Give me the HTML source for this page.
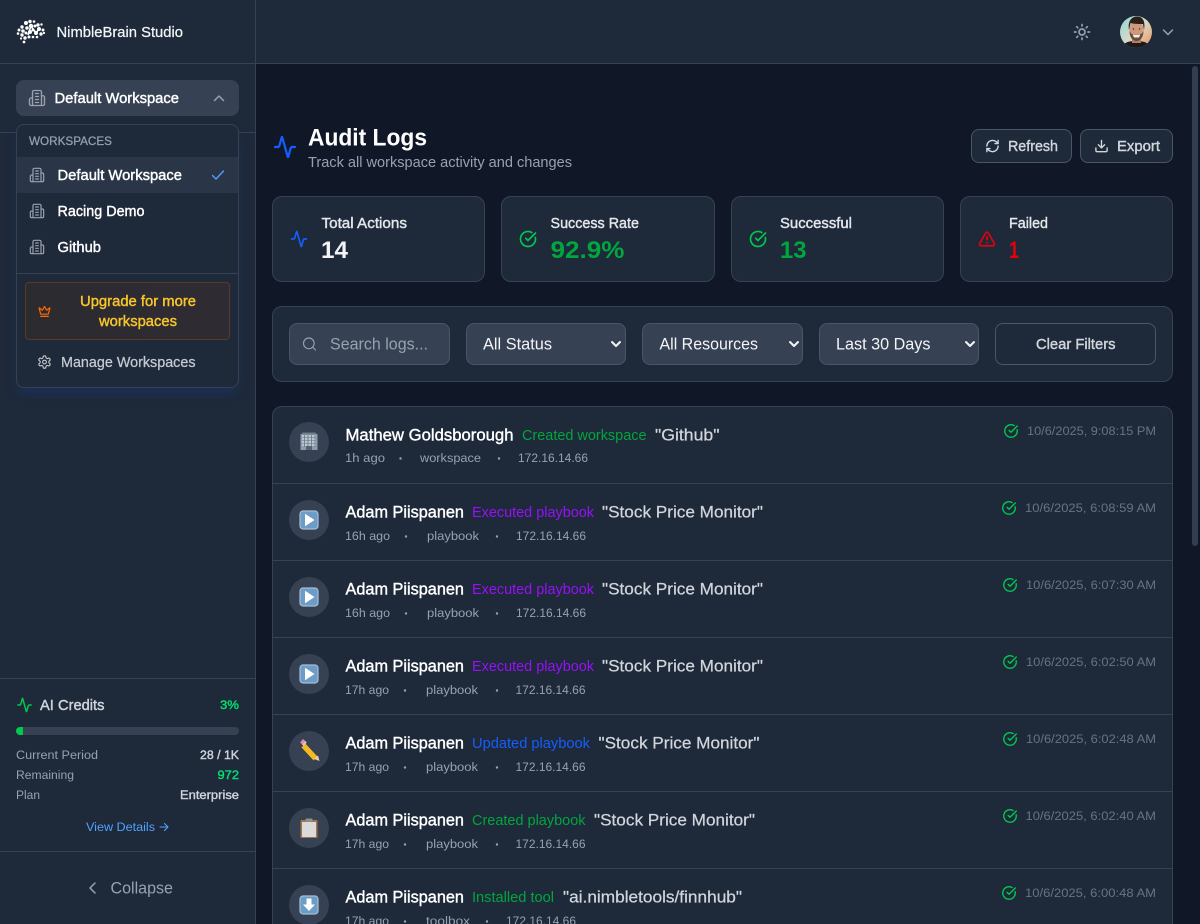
<!DOCTYPE html>
<html lang="en"><head><meta charset="utf-8"><title>Audit Logs - NimbleBrain Studio</title>
<style>
html,body{margin:0;padding:0;width:1200px;height:924px;overflow:hidden;background:#101828;font-family:"Liberation Sans",sans-serif}
#app{position:relative;width:1200px;height:924px;overflow:hidden;background:#101828}
.b{position:absolute;box-sizing:border-box}
svg.o{position:absolute;left:0;top:0;width:1200px;height:924px}
text{fill:currentColor;font-family:"Liberation Sans",sans-serif;white-space:pre}
.m{stroke:currentColor;stroke-width:.25px}
.s{stroke:currentColor;stroke-width:.4px}
.f{font-size:14.5px}.g{font-size:16.5px}.h{font-size:12.4px}
.i{fill:none;stroke:currentColor;stroke-width:2.2;stroke-linecap:round;stroke-linejoin:round}
</style></head><body><div id="app">
<div class="b" style="left:0;top:0;width:256px;height:924px;background:#1e2939;border-right:1px solid #364153"></div>
<div class="b" style="left:256px;top:0;width:944px;height:64px;background:#1e2939"></div>
<div class="b" style="left:0;top:63px;width:1200px;height:1px;background:#364153"></div>
<div class="b" style="left:0;top:132px;width:255px;height:1px;background:#364153"></div>
<div class="b" style="left:16px;top:80px;width:223px;height:36px;border-radius:8px;background:#364153"></div>
<div class="b" style="left:16px;top:124px;width:223px;height:264px;border-radius:8px;background:#1e2939;border:1px solid #364153;box-shadow:0 8px 12px -2px rgba(25,55,130,.4)"></div>
<div class="b" style="left:17px;top:157px;width:221px;height:36px;background:#2a3648"></div>
<div class="b" style="left:17px;top:273px;width:221px;height:1px;background:#364153"></div>
<div class="b" style="left:25px;top:282px;width:205px;height:58px;border-radius:4px;background:linear-gradient(90deg,#2b2b30,#2f2b33);border:1px solid #5a3a27"></div>
<div class="b" style="left:0;top:678px;width:255px;height:1px;background:#364153"></div>
<div class="b" style="left:16px;top:727px;width:223px;height:8px;border-radius:4px;background:#364153;overflow:hidden"><div style="width:7px;height:8px;background:#00c950"></div></div>
<div class="b" style="left:0;top:851px;width:255px;height:1px;background:#364153"></div>
<div class="b" style="left:1192px;top:66px;width:6px;height:480px;border-radius:3px;background:#323e50"></div>
<div class="b" style="left:971px;top:129px;width:101px;height:34px;border-radius:8px;background:#1e2939;border:1px solid #4a5565"></div>
<div class="b" style="left:1080px;top:129px;width:93px;height:34px;border-radius:8px;background:#1e2939;border:1px solid #4a5565"></div>
<div class="b" style="left:272px;top:196px;width:213px;height:86px;border-radius:10px;background:#1e2939;border:1px solid #364153"></div>
<div class="b" style="left:501px;top:196px;width:214px;height:86px;border-radius:10px;background:#1e2939;border:1px solid #364153"></div>
<div class="b" style="left:731px;top:196px;width:213px;height:86px;border-radius:10px;background:#1e2939;border:1px solid #364153"></div>
<div class="b" style="left:960px;top:196px;width:213px;height:86px;border-radius:10px;background:#1e2939;border:1px solid #364153"></div>
<div class="b" style="left:272px;top:306px;width:901px;height:76px;border-radius:10px;background:#1e2939;border:1px solid #364153"></div>
<div class="b" style="left:289px;top:323px;width:161px;height:42px;border-radius:8px;background:#364153;border:1px solid #4a5565"></div>
<div class="b" style="left:466px;top:323px;width:160px;height:42px;border-radius:8px;background:#364153;border:1px solid #4a5565"></div>
<div class="b" style="left:642px;top:323px;width:161px;height:42px;border-radius:8px;background:#364153;border:1px solid #4a5565"></div>
<div class="b" style="left:819px;top:323px;width:160px;height:42px;border-radius:8px;background:#364153;border:1px solid #4a5565"></div>
<div class="b" style="left:995px;top:323px;width:161px;height:42px;border-radius:8px;background:#1e2939;border:1px solid #4a5565"></div>
<div class="b" style="left:272px;top:406px;width:901px;height:540px;border-radius:10px;background:#1e2939;border:1px solid #364153"></div>
<div class="b" style="left:273px;top:483px;width:899px;height:1px;background:#364153"></div>
<div class="b" style="left:273px;top:560px;width:899px;height:1px;background:#364153"></div>
<div class="b" style="left:273px;top:637px;width:899px;height:1px;background:#364153"></div>
<div class="b" style="left:273px;top:714px;width:899px;height:1px;background:#364153"></div>
<div class="b" style="left:273px;top:791px;width:899px;height:1px;background:#364153"></div>
<div class="b" style="left:273px;top:868px;width:899px;height:1px;background:#364153"></div>

<svg class="o" viewBox="0 0 1200 924" xmlns="http://www.w3.org/2000/svg">
<defs>
<symbol id="bld" viewBox="0 0 24 24"><g class="i" style="stroke-width:1.8"><path d="M6 22V4a2 2 0 0 1 2-2h8a2 2 0 0 1 2 2v18Z"/><path d="M6 12H4a2 2 0 0 0-2 2v6a2 2 0 0 0 2 2h2"/><path d="M18 9h2a2 2 0 0 1 2 2v9a2 2 0 0 1-2 2h-2"/><path d="M10 6h4M10 10h4M10 14h4M10 18h4"/></g></symbol>
<symbol id="pulse" viewBox="0 0 24 24"><path class="i" d="M22 12h-2.48a2 2 0 0 0-1.93 1.46l-2.35 8.36a.25.25 0 0 1-.48 0L9.24 2.18a.25.25 0 0 0-.48 0l-2.35 8.36A2 2 0 0 1 4.49 12H2"/></symbol>
<symbol id="chk" viewBox="0 0 24 24"><g class="i"><path d="M21.801 10A10 10 0 1 1 17 3.335"/><path d="m9 11 3 3L22 4"/></g></symbol>
<symbol id="pl" viewBox="0 0 20 20"><rect x="1" y="1" width="18" height="18" rx="3" fill="#6d9cc6" stroke="#a3bfd8" stroke-width="1.2"/><path d="M6 3.8 15.500 10 6 16.200z" fill="#fff"/></symbol>
<clipPath id="av"><circle cx="1136" cy="32" r="16"/></clipPath>
<linearGradient id="avg" x1="0" y1="0" x2="1" y2="1"><stop offset="0" stop-color="#8fd8d6"/><stop offset=".5" stop-color="#d8d8c8"/><stop offset="1" stop-color="#ee955a"/></linearGradient>
</defs>

<!-- logo -->
<g fill="#fff">
<circle cx="22" cy="27" r="1.7"/><circle cx="26" cy="23" r="2"/><circle cx="30" cy="21.500" r="1.700"/><circle cx="34" cy="21.500" r="1.300"/><circle cx="38" cy="25" r="1.700"/><circle cx="41.500" cy="24.500" r="1.200"/>
<circle cx="19" cy="30" r="1.500"/><circle cx="23" cy="31" r="1.800"/><circle cx="27" cy="28" r="1.800"/><circle cx="31" cy="26" r="2.200"/><circle cx="35" cy="26" r="1.500"/><circle cx="39" cy="29" r="2"/><circle cx="43" cy="30" r="1.500"/>
<circle cx="18" cy="33.500" r="1.300"/><circle cx="22" cy="35" r="1.700"/><circle cx="26" cy="33" r="1.500"/><circle cx="30" cy="32" r="2"/><circle cx="33" cy="30" r="1.500"/><circle cx="36" cy="33" r="2"/><circle cx="41" cy="34" r="1.700"/><circle cx="44" cy="33" r="1.100"/>
<circle cx="25" cy="38" r="1.700"/><circle cx="29" cy="37" r="1.500"/><circle cx="33" cy="37" r="1.300"/><circle cx="37" cy="37" r="1.300"/><circle cx="24" cy="42" r="1.400"/><circle cx="21" cy="38.500" r="1.100"/>
</g>
<g fill="none" stroke="#fff" stroke-width="1.600"><path d="M28 35 31 26 36 33 39 29"/></g>
<text x="56.5" y="37" textLength="126.500" lengthAdjust="spacingAndGlyphs" class="f m" style="color:#f3f4f6">NimbleBrain Studio</text>

<!-- top right -->
<g color="#99a1af" transform="translate(1073,23)"><svg width="18" height="18" viewBox="0 0 24 24"><g class="i"><circle cx="12" cy="12" r="4"/><path d="M12 2v2M12 20v2M4.930 4.930l1.410 1.410M17.660 17.660l1.410 1.410M2 12h2M20 12h2M6.340 17.660l-1.410 1.410M19.070 4.930l-1.410 1.410"/></g></svg></g>
<g clip-path="url(#av)">
<rect x="1120" y="16" width="32" height="32" fill="url(#avg)"/>
<path d="M1122 48c1-6 8-7 14-7s13 1 14 7z" fill="#1b1a1c"/>
<rect x="1132" y="36" width="9" height="7" fill="#b47e5f"/>
<ellipse cx="1136.500" cy="30" rx="7" ry="9.500" fill="#cf9a7b"/>
<path d="M1129.500 31c0 6 3 10 7 10s7-4 7-10c-1 2-2 3-3 3h-8c-1 0-2-1-3-3z" fill="#6b4a39"/>
<path d="M1132.500 34.500h8l-1.500 3h-5z" fill="#f6ece4"/>
<path d="M1129 30c-1.500-8 2-13.500 8-13.500s8.500 5 7 13.500l-1-6c-3 0-9 0-12.500-1z" fill="#2a1f1b"/>
<circle cx="1133.500" cy="29" r=".7" fill="#3a2a22"/><circle cx="1139.500" cy="29" r=".7" fill="#3a2a22"/>
</g>
<path class="i" color="#99a1af" style="stroke-width:1.500" d="M1163.500 30l4.500 4.500 4.500-4.500"/>

<!-- workspace selector -->
<use href="#bld" x="28" y="89" width="18" height="18" color="#99a1af"/>
<text x="54.500" y="103" textLength="124.500" lengthAdjust="spacingAndGlyphs" class="f s" style="color:#fff">Default Workspace</text>
<path class="i" color="#99a1af" style="stroke-width:1.500" d="M214.500 100.500l4.500-4.500 4.500 4.500"/>
<text x="29" y="145" textLength="83" lengthAdjust="spacingAndGlyphs" class="h m" style="color:#99a1af">WORKSPACES</text>
<use href="#bld" x="29" y="167" width="16" height="16" color="#99a1af"/>
<text x="57.500" y="180" textLength="124.500" lengthAdjust="spacingAndGlyphs" class="f s" style="color:#fff">Default Workspace</text>
<path class="i" color="#51a2ff" style="stroke-width:1.300" d="M212.500 175.500l3.500 3.500 7.500-8"/>
<use href="#bld" x="29" y="203" width="16" height="16" color="#99a1af"/>
<text x="57.500" y="216" textLength="87" lengthAdjust="spacingAndGlyphs" class="f s" style="color:#fff">Racing Demo</text>
<use href="#bld" x="29" y="239" width="16" height="16" color="#99a1af"/>
<text x="57.500" y="252" textLength="43.500" lengthAdjust="spacingAndGlyphs" class="f s" style="color:#fff">Github</text>
<text x="80" y="306" textLength="116" lengthAdjust="spacingAndGlyphs" class="f s" style="color:#f8c62b">Upgrade for more</text>
<text x="99" y="326" textLength="78" lengthAdjust="spacingAndGlyphs" class="f s" style="color:#f8c62b">workspaces</text>
<g color="#ff6900" transform="translate(38,305)"><svg width="13" height="13" viewBox="0 0 24 24"><g class="i"><path d="M11.562 3.266a.5.5 0 0 1 .876 0L15.390 8.870a1 1 0 0 0 1.516.294L21.183 5.500a.5.5 0 0 1 .798.519l-2.834 10.246a1 1 0 0 1-.956.734H5.810a1 1 0 0 1-.957-.734L2.020 6.020a.5.5 0 0 1 .798-.519l4.276 3.664a1 1 0 0 0 1.516-.294z"/><path d="M5 21h14"/></g></svg></g>
<g color="#c5cad3" transform="translate(37,354.500)"><svg width="15" height="15" viewBox="0 0 24 24"><g class="i" style="stroke-width:1.800"><path d="M12.220 2h-.44a2 2 0 0 0-2 2v.18a2 2 0 0 1-1 1.730l-.43.25a2 2 0 0 1-2 0l-.15-.08a2 2 0 0 0-2.730.73l-.22.38a2 2 0 0 0 .73 2.730l.15.1a2 2 0 0 1 1 1.720v.51a2 2 0 0 1-1 1.740l-.15.09a2 2 0 0 0-.73 2.730l.22.38a2 2 0 0 0 2.730.73l.15-.08a2 2 0 0 1 2 0l.43.25a2 2 0 0 1 1 1.730V20a2 2 0 0 0 2 2h.44a2 2 0 0 0 2-2v-.18a2 2 0 0 1 1-1.730l.43-.25a2 2 0 0 1 2 0l.15.08a2 2 0 0 0 2.730-.73l.22-.39a2 2 0 0 0-.73-2.730l-.15-.08a2 2 0 0 1-1-1.740v-.5a2 2 0 0 1 1-1.740l.15-.09a2 2 0 0 0 .73-2.730l-.22-.38a2 2 0 0 0-2.730-.73l-.15.08a2 2 0 0 1-2 0l-.43-.25a2 2 0 0 1-1-1.730V4a2 2 0 0 0-2-2z"/><circle cx="12" cy="12" r="3"/></g></svg></g>
<text x="61" y="367" textLength="134.500" lengthAdjust="spacingAndGlyphs" class="f m" style="color:#c5cad3">Manage Workspaces</text>

<!-- credits -->
<use href="#pulse" x="16.500" y="697" width="16" height="16" color="#00c950"/>
<text x="40" y="710" textLength="64.500" lengthAdjust="spacingAndGlyphs" class="f s" style="color:#d1d5dc">AI Credits</text>
<text x="220" y="709" textLength="19" lengthAdjust="spacingAndGlyphs" class="h s" style="color:#05df72">3%</text>
<text x="16" y="759" textLength="82" lengthAdjust="spacingAndGlyphs" class="h" style="color:#99a1af">Current Period</text>
<text x="200" y="759" textLength="39" lengthAdjust="spacingAndGlyphs" class="h s" style="color:#d1d5dc">28 / 1K</text>
<text x="16" y="779" textLength="58" lengthAdjust="spacingAndGlyphs" class="h" style="color:#99a1af">Remaining</text>
<text x="217.500" y="779" textLength="21.500" lengthAdjust="spacingAndGlyphs" class="h s" style="color:#05df72">972</text>
<text x="16" y="799" textLength="24" lengthAdjust="spacingAndGlyphs" class="h" style="color:#99a1af">Plan</text>
<text x="180" y="799" textLength="59" lengthAdjust="spacingAndGlyphs" class="h s" style="color:#d1d5dc">Enterprise</text>
<text x="86" y="831" textLength="69" lengthAdjust="spacingAndGlyphs" class="h" style="color:#51a2ff">View Details</text>
<path class="i" color="#51a2ff" style="stroke-width:1.100" d="M160 827h8M164.500 823.500l3.500 3.500-3.500 3.500"/>
<path class="i" color="#99a1af" style="stroke-width:1.500" d="M95 883l-5 5 5 5"/>
<text x="110.500" y="893.500" textLength="62.500" lengthAdjust="spacingAndGlyphs" class="g" style="color:#99a1af">Collapse</text>

<!-- header -->
<use href="#pulse" x="273" y="135" width="24" height="24" color="#155dfc"/>
<text x="308" y="145.500" textLength="119" lengthAdjust="spacingAndGlyphs" font-size="24.500" font-weight="700" style="color:#fff">Audit Logs</text>
<text x="308" y="167" textLength="264" lengthAdjust="spacingAndGlyphs" class="f" style="color:#99a1af">Track all workspace activity and changes</text>
<g color="#d1d5dc" transform="translate(985,138.500)"><svg width="15" height="15" viewBox="0 0 24 24"><g class="i"><path d="M3 12a9 9 0 0 1 9-9 9.750 9.750 0 0 1 6.740 2.740L21 8"/><path d="M21 3v5h-5"/><path d="M21 12a9 9 0 0 1-9 9 9.750 9.750 0 0 1-6.740-2.740L3 16"/><path d="M8 16H3v5"/></g></svg></g>
<text x="1008" y="151" textLength="50" lengthAdjust="spacingAndGlyphs" class="f s" style="color:#d1d5dc">Refresh</text>
<g color="#d1d5dc" transform="translate(1094,138.500)"><svg width="15" height="15" viewBox="0 0 24 24"><g class="i"><path d="M12 15V3"/><path d="M21 15v4a2 2 0 0 1-2 2H5a2 2 0 0 1-2-2v-4"/><path d="m7 10 5 5 5-5"/></g></svg></g>
<text x="1117" y="151" textLength="43" lengthAdjust="spacingAndGlyphs" class="f s" style="color:#d1d5dc">Export</text>

<!-- stats -->
<use href="#pulse" x="290" y="230" width="18" height="18" color="#155dfc"/>
<text x="321.500" y="228" textLength="85.500" lengthAdjust="spacingAndGlyphs" class="f s" style="color:#e5e7eb">Total Actions</text>
<text x="321" y="258" textLength="27" lengthAdjust="spacingAndGlyphs" font-size="24.500" font-weight="700" style="color:#f3f4f6">14</text>
<use href="#chk" x="519" y="230" width="18" height="18" color="#00c950"/>
<text x="550.500" y="228" textLength="88.500" lengthAdjust="spacingAndGlyphs" class="f s" style="color:#e5e7eb">Success Rate</text>
<text x="550.500" y="258" textLength="74" lengthAdjust="spacingAndGlyphs" font-size="24.500" font-weight="700" style="color:#00a63e">92.9%</text>
<use href="#chk" x="749" y="230" width="18" height="18" color="#00c950"/>
<text x="780" y="228" textLength="72" lengthAdjust="spacingAndGlyphs" class="f s" style="color:#e5e7eb">Successful</text>
<text x="780" y="258" textLength="26.500" lengthAdjust="spacingAndGlyphs" font-size="24.500" font-weight="700" style="color:#00a63e">13</text>
<g color="#e7000b" transform="translate(978,230)"><svg width="18" height="18" viewBox="0 0 24 24"><g class="i"><path d="m21.730 18-8-14a2 2 0 0 0-3.480 0l-8 14A2 2 0 0 0 4 21h16a2 2 0 0 0 1.730-3"/><path d="M12 9v4"/><path d="M12 17h.01"/></g></svg></g>
<text x="1009" y="228" textLength="39" lengthAdjust="spacingAndGlyphs" class="f s" style="color:#e5e7eb">Failed</text>
<text x="1009" y="258" textLength="10" lengthAdjust="spacingAndGlyphs" font-size="24.500" font-weight="700" style="color:#e7000b">1</text>

<!-- filters -->
<g color="#99a1af" transform="translate(301.500,336)"><svg width="16" height="16" viewBox="0 0 24 24"><g class="i" style="stroke-width:1.700"><path d="m21 21-4.340-4.340"/><circle cx="11" cy="11" r="8"/></g></svg></g>
<text x="330" y="349.500" textLength="98" lengthAdjust="spacingAndGlyphs" class="g" style="color:#99a1af">Search logs...</text>
<text x="483" y="349.500" textLength="69" lengthAdjust="spacingAndGlyphs" class="g" style="color:#f3f4f6">All Status</text>
<text x="659.500" y="349.500" textLength="98.500" lengthAdjust="spacingAndGlyphs" class="g" style="color:#f3f4f6">All Resources</text>
<text x="836" y="349.500" textLength="94.500" lengthAdjust="spacingAndGlyphs" class="g" style="color:#f3f4f6">Last 30 Days</text>
<g fill="none" stroke="#f3f4f6" stroke-width="2" stroke-linecap="round" stroke-linejoin="round"><path d="M612 342l4 4 4-4"/><path d="M790 342l4 4 4-4"/><path d="M966 342l4 4 4-4"/></g>
<text x="1036" y="349" textLength="79.500" lengthAdjust="spacingAndGlyphs" class="f s" style="color:#d1d5dc">Clear Filters</text>

<!-- rows -->
<g>
<circle cx="309" cy="442" r="20" fill="#364153"/>
<rect x="300.500" y="434" width="17" height="16" fill="#8f9cab"/><rect x="302" y="432.500" width="14" height="2" fill="#6f7b88"/>
<path d="M302 436h14M302 439h14M302 442h14M302 445h14" stroke="#c3d3e0" stroke-width="1.500"/><path d="M304.500 435v12M308 435v12M311.500 435v12M315 435v12" stroke="#5f6b78" stroke-width=".7"/><rect x="306" y="446" width="6" height="4" fill="#59626d"/>
<text x="345.500" y="440.500" textLength="168" lengthAdjust="spacingAndGlyphs" class="g s" style="color:#fff">Mathew Goldsborough</text>
<text x="522" y="440" textLength="124.500" lengthAdjust="spacingAndGlyphs" class="f" style="color:#00a63e">Created workspace</text>
<text x="655" y="440.500" textLength="64.500" lengthAdjust="spacingAndGlyphs" class="g m" style="color:#d1d5dc">"Github"</text>
<text x="345" y="462" textLength="40" lengthAdjust="spacingAndGlyphs" class="h" style="color:#99a1af">1h ago</text><circle cx="400.500" cy="458.500" r="1.200" fill="#99a1af"/>
<text x="420" y="462" textLength="61" lengthAdjust="spacingAndGlyphs" class="h" style="color:#99a1af">workspace</text><circle cx="499" cy="458.500" r="1.200" fill="#99a1af"/>
<text x="518" y="462" textLength="70" lengthAdjust="spacingAndGlyphs" class="h" style="color:#99a1af">172.16.14.66</text>
<use href="#chk" x="1003.500" y="423.500" width="15" height="15" color="#00c950"/>
<text x="1027" y="435" textLength="129" lengthAdjust="spacingAndGlyphs" class="h" style="color:#6a7282">10/6/2025, 9:08:15 PM</text>
</g>
<g transform="translate(0,77)">
<circle cx="309" cy="443" r="20" fill="#364153"/><use href="#pl" x="299" y="433" width="20" height="20"/>
<text x="345.500" y="440.500" textLength="118.500" lengthAdjust="spacingAndGlyphs" class="g s" style="color:#fff">Adam Piispanen</text>
<text x="472" y="440" textLength="122" lengthAdjust="spacingAndGlyphs" class="f" style="color:#9810fa">Executed playbook</text>
<text x="602" y="440.500" textLength="161" lengthAdjust="spacingAndGlyphs" class="g m" style="color:#d1d5dc">"Stock Price Monitor"</text>
<text x="345" y="463" textLength="45" lengthAdjust="spacingAndGlyphs" class="h" style="color:#99a1af">16h ago</text><circle cx="406" cy="459.500" r="1.200" fill="#99a1af"/>
<text x="427" y="463" textLength="52" lengthAdjust="spacingAndGlyphs" class="h" style="color:#99a1af">playbook</text><circle cx="497" cy="459.500" r="1.200" fill="#99a1af"/>
<text x="516" y="463" textLength="70" lengthAdjust="spacingAndGlyphs" class="h" style="color:#99a1af">172.16.14.66</text>
<use href="#chk" x="1001.500" y="423.500" width="15" height="15" color="#00c950"/>
<text x="1025" y="435" textLength="131" lengthAdjust="spacingAndGlyphs" class="h" style="color:#6a7282">10/6/2025, 6:08:59 AM</text>
</g>
<g transform="translate(0,154)">
<circle cx="309" cy="443" r="20" fill="#364153"/><use href="#pl" x="299" y="433" width="20" height="20"/>
<text x="345.500" y="440.500" textLength="118.500" lengthAdjust="spacingAndGlyphs" class="g s" style="color:#fff">Adam Piispanen</text>
<text x="472" y="440" textLength="122" lengthAdjust="spacingAndGlyphs" class="f" style="color:#9810fa">Executed playbook</text>
<text x="602" y="440.500" textLength="161" lengthAdjust="spacingAndGlyphs" class="g m" style="color:#d1d5dc">"Stock Price Monitor"</text>
<text x="345" y="463" textLength="45" lengthAdjust="spacingAndGlyphs" class="h" style="color:#99a1af">16h ago</text><circle cx="406" cy="459.500" r="1.200" fill="#99a1af"/>
<text x="427" y="463" textLength="52" lengthAdjust="spacingAndGlyphs" class="h" style="color:#99a1af">playbook</text><circle cx="497" cy="459.500" r="1.200" fill="#99a1af"/>
<text x="516" y="463" textLength="70" lengthAdjust="spacingAndGlyphs" class="h" style="color:#99a1af">172.16.14.66</text>
<use href="#chk" x="1002.500" y="423.500" width="15" height="15" color="#00c950"/>
<text x="1026" y="435" textLength="130" lengthAdjust="spacingAndGlyphs" class="h" style="color:#6a7282">10/6/2025, 6:07:30 AM</text>
</g>
<g transform="translate(0,231)">
<circle cx="309" cy="443" r="20" fill="#364153"/><use href="#pl" x="299" y="433" width="20" height="20"/>
<text x="345.500" y="440.500" textLength="118.500" lengthAdjust="spacingAndGlyphs" class="g s" style="color:#fff">Adam Piispanen</text>
<text x="472" y="440" textLength="122" lengthAdjust="spacingAndGlyphs" class="f" style="color:#9810fa">Executed playbook</text>
<text x="602" y="440.500" textLength="161" lengthAdjust="spacingAndGlyphs" class="g m" style="color:#d1d5dc">"Stock Price Monitor"</text>
<text x="345" y="463" textLength="44" lengthAdjust="spacingAndGlyphs" class="h" style="color:#99a1af">17h ago</text><circle cx="405" cy="459.500" r="1.200" fill="#99a1af"/>
<text x="426" y="463" textLength="52" lengthAdjust="spacingAndGlyphs" class="h" style="color:#99a1af">playbook</text><circle cx="497" cy="459.500" r="1.200" fill="#99a1af"/>
<text x="515.500" y="463" textLength="70" lengthAdjust="spacingAndGlyphs" class="h" style="color:#99a1af">172.16.14.66</text>
<use href="#chk" x="1002.500" y="423.500" width="15" height="15" color="#00c950"/>
<text x="1026" y="435" textLength="130" lengthAdjust="spacingAndGlyphs" class="h" style="color:#6a7282">10/6/2025, 6:02:50 AM</text>
</g>
<g transform="translate(0,308)">
<circle cx="309" cy="443" r="20" fill="#364153"/>
<path d="M303.500 437.500l12 13" stroke="#f5b921" stroke-width="5.500"/><path d="M300 434.500l3-3.500 3.500 3-3 3.500z" fill="#e98a9c"/><path d="M302 436.500l3.300-3.200 1.400 1.400-3.300 3.200z" fill="#c9ced6"/><path d="M314 451l4-3.500 1.500 5.500z" fill="#e6cfa5"/>
<text x="345.500" y="440.500" textLength="118.500" lengthAdjust="spacingAndGlyphs" class="g s" style="color:#fff">Adam Piispanen</text>
<text x="472" y="440" textLength="118" lengthAdjust="spacingAndGlyphs" class="f" style="color:#155dfc">Updated playbook</text>
<text x="598.500" y="440.500" textLength="161" lengthAdjust="spacingAndGlyphs" class="g m" style="color:#d1d5dc">"Stock Price Monitor"</text>
<text x="345" y="463" textLength="44" lengthAdjust="spacingAndGlyphs" class="h" style="color:#99a1af">17h ago</text><circle cx="405" cy="459.500" r="1.200" fill="#99a1af"/>
<text x="426" y="463" textLength="52" lengthAdjust="spacingAndGlyphs" class="h" style="color:#99a1af">playbook</text><circle cx="497" cy="459.500" r="1.200" fill="#99a1af"/>
<text x="515.500" y="463" textLength="70" lengthAdjust="spacingAndGlyphs" class="h" style="color:#99a1af">172.16.14.66</text>
<use href="#chk" x="1002.500" y="423.500" width="15" height="15" color="#00c950"/>
<text x="1026" y="435" textLength="130" lengthAdjust="spacingAndGlyphs" class="h" style="color:#6a7282">10/6/2025, 6:02:48 AM</text>
</g>
<g transform="translate(0,385)">
<circle cx="309" cy="443" r="20" fill="#364153"/>
<rect x="300.500" y="435" width="17" height="18" rx="1" fill="#a5754a"/><rect x="302" y="437" width="14" height="15" fill="#dadada"/><rect x="305.500" y="433.500" width="7" height="3" rx="1" fill="#8b8f96"/>
<text x="345.500" y="440.500" textLength="118.500" lengthAdjust="spacingAndGlyphs" class="g s" style="color:#fff">Adam Piispanen</text>
<text x="472" y="440" textLength="113.500" lengthAdjust="spacingAndGlyphs" class="f" style="color:#00a63e">Created playbook</text>
<text x="594" y="440.500" textLength="161" lengthAdjust="spacingAndGlyphs" class="g m" style="color:#d1d5dc">"Stock Price Monitor"</text>
<text x="345" y="463" textLength="44" lengthAdjust="spacingAndGlyphs" class="h" style="color:#99a1af">17h ago</text><circle cx="405" cy="459.500" r="1.200" fill="#99a1af"/>
<text x="426" y="463" textLength="52" lengthAdjust="spacingAndGlyphs" class="h" style="color:#99a1af">playbook</text><circle cx="497" cy="459.500" r="1.200" fill="#99a1af"/>
<text x="515.500" y="463" textLength="70" lengthAdjust="spacingAndGlyphs" class="h" style="color:#99a1af">172.16.14.66</text>
<use href="#chk" x="1002.500" y="423.500" width="15" height="15" color="#00c950"/>
<text x="1025.500" y="435" textLength="130.500" lengthAdjust="spacingAndGlyphs" class="h" style="color:#6a7282">10/6/2025, 6:02:40 AM</text>
</g>
<g transform="translate(0,462)">
<circle cx="309" cy="443" r="20" fill="#364153"/>
<rect x="300" y="434" width="18" height="18" rx="3" fill="#6d9cc6" stroke="#a3bfd8" stroke-width="1.200"/><path d="M306.500 436.500h5v6h3.500l-6 6.500-6-6.500h3.500z" fill="#fff"/>
<text x="345.500" y="440.500" textLength="118.500" lengthAdjust="spacingAndGlyphs" class="g s" style="color:#fff">Adam Piispanen</text>
<text x="472" y="440" textLength="82" lengthAdjust="spacingAndGlyphs" class="f" style="color:#00a63e">Installed tool</text>
<text x="563" y="440.500" textLength="179" lengthAdjust="spacingAndGlyphs" class="g m" style="color:#d1d5dc">"ai.nimbletools/finnhub"</text>
<text x="345" y="463" textLength="44" lengthAdjust="spacingAndGlyphs" class="h" style="color:#99a1af">17h ago</text><circle cx="405" cy="459.500" r="1.200" fill="#99a1af"/>
<text x="426" y="463" textLength="44" lengthAdjust="spacingAndGlyphs" class="h" style="color:#99a1af">toolbox</text><circle cx="487" cy="459.500" r="1.200" fill="#99a1af"/>
<text x="506" y="463" textLength="70" lengthAdjust="spacingAndGlyphs" class="h" style="color:#99a1af">172.16.14.66</text>
<use href="#chk" x="1001.500" y="423.500" width="15" height="15" color="#00c950"/>
<text x="1025" y="435" textLength="131" lengthAdjust="spacingAndGlyphs" class="h" style="color:#6a7282">10/6/2025, 6:00:48 AM</text>
</g>
</svg>
</div></body></html>
